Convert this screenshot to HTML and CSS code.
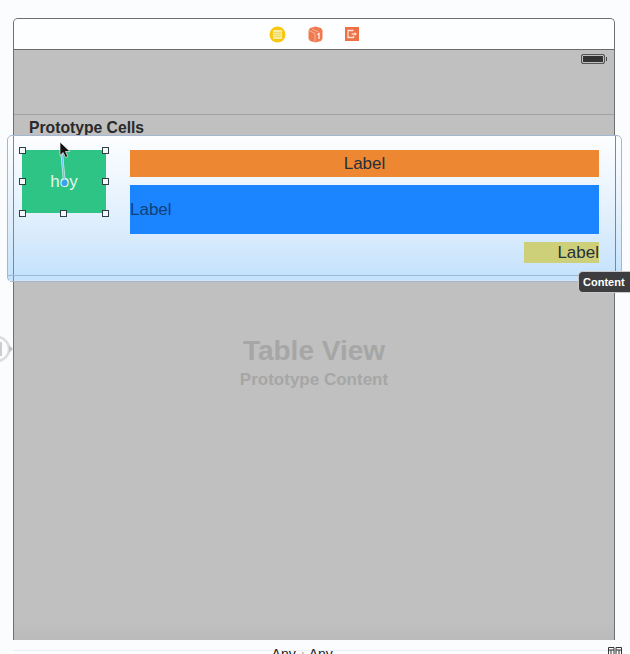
FILE: index.html
```html
<!DOCTYPE html>
<html lang="en">
<head>
<meta charset="utf-8">
<title>Storyboard</title>
<link rel="stylesheet" href="styles.css">
</head>
<body>
<main class="canvas">
  <svg class="segue" width="24" height="36" viewBox="0 0 24 36" aria-hidden="true">
    <circle cx="-3" cy="18" r="12" fill="none" stroke="#dcdcdc" stroke-width="2.5"/>
    <rect x="-3" y="11" width="5" height="14" fill="#cdcdcd"/>
    <path d="M9 14 L13 18 L9 22Z" fill="#c4c4c4"/>
  </svg>
  <section class="scene">
    <header class="dock">
      <svg width="17" height="17" viewBox="0 0 17 17" aria-hidden="true">
        <circle cx="8.5" cy="8.5" r="8" fill="#f8c714"/>
        <rect x="4" y="4" width="9" height="9" rx="1" fill="#f9eda0"/>
        <path d="M4.5 6.5h8M4.5 8.5h8M4.5 10.5h8" stroke="#eccb4a" stroke-width=".7"/>
      </svg>
      <svg width="15" height="17" viewBox="0 0 15 17" aria-hidden="true">
        <path d="M7.5.5 13 2 14.500 4.500V12.500L13 15 7.5 16.500 2 15 .5 12.500V4.500L2 2Z" fill="#ef7a50"/>
        <path d="M1 4.5 7 7.5V16M4 3l6.5 3" stroke="#f9c3ac" stroke-width=".8" fill="none"/>
        <path d="M9.5 8.5 11 7.5V13" stroke="#fff" stroke-width="1.2" fill="none"/>
      </svg>
      <svg width="14" height="14" viewBox="0 0 14 14" aria-hidden="true">
        <rect width="14" height="14" fill="#ee7044"/>
        <path d="M8.5 3.5H3v7h5.500V9" stroke="#fde4d8" stroke-width="1.300" fill="none"/>
        <path d="M6.500 7H10" stroke="#fde4d8" stroke-width="1.300"/>
        <path d="M9.500 5 12 7 9.500 9Z" fill="#fde4d8"/>
      </svg>
    </header>
    <div class="status">
      <span class="battery"></span>
    </div>
    <h2 class="section-title">Prototype Cells</h2>
    <article class="cell">
      <div class="cell-body">
        <div class="thumb">
          <span class="thumb-text">hoy</span>
          <i class="handle h-tl"></i><i class="handle h-tr"></i>
          <i class="handle h-ml"></i><i class="handle h-mr"></i>
          <i class="handle h-bl"></i><i class="handle h-bm"></i><i class="handle h-br"></i>
          <svg class="wire" width="12" height="44" viewBox="0 0 12 44" aria-hidden="true">
            <path d="M2.500 1 5.500 33" stroke="#fff" stroke-width="2.600" opacity=".75"/>
            <path d="M2.500 1 5.500 33" stroke="#6fbcf4" stroke-width="1.200"/>
            <circle cx="5.500" cy="33" r="3" fill="#3c9ff0"/>
          </svg>
        </div>
        <div class="labels">
          <div class="label label-orange">Label</div>
          <div class="label label-blue">Label</div>
          <div class="label label-olive">Label</div>
        </div>
      </div>
      <div class="cell-foot"></div>
      <span class="tooltip">Content</span>
    </article>
    <svg class="cursor" width="13" height="18" viewBox="0 0 13 18" aria-hidden="true">
      <path d="M1 1V14.500L4.200 11.500 6.500 16.500 8.800 15.500 6.500 10.500H11Z" fill="#111" stroke="#f4f4f4" stroke-width=".7"/>
    </svg>
    <div class="table-body">
      <div class="table-title">Table View</div>
      <div class="table-sub">Prototype Content</div>
    </div>
  </section>
  <footer class="size-bar">
    <span class="size-mark">w</span><span class="size-any">Any</span>
    <span class="size-mark size-h">h</span><span class="size-any">Any</span>
    <svg class="size-icon" width="14" height="8" viewBox="0 0 14 8" aria-hidden="true">
      <path d="M.5 8V.500H6V8M.500 3H6M8 8V.500h5.500V8M8 3h5.500M3 3v5M11 3v5" stroke="#333" fill="none"/>
    </svg>
  </footer>
</main>
</body>
</html>
```
FILE: styles.css
```css
* { box-sizing: border-box; }
html, body { margin: 0; height: 100%; }
body {
  background: #fbfcfe;
  font-family: "Liberation Sans", Arial, sans-serif;
  overflow: hidden;
}
.canvas {
  position: relative;
  width: 630px;
  height: 654px;
  padding: 18px 15px 0 13px;
  overflow: hidden;
}
.segue { position: absolute; left: 0; top: 331px; }
.scene {
  position: relative;
  width: 602px;
  height: 622px;
  display: flex;
  flex-direction: column;
  border: 1px solid #6f6f6f;
  border-bottom: 0;
  border-radius: 5px 5px 0 0;
  background: linear-gradient(to bottom, #c0c0c0 0, #c0c0c0 97%, #bababa 100%);
}
.dock {
  height: 31px;
  flex: none;
  display: flex;
  align-items: center;
  justify-content: center;
  gap: 22px;
  background: #fdfeff;
  border-bottom: 1px solid #6b6b6b;
  border-radius: 4px 4px 0 0;
}
.status {
  height: 65px;
  flex: none;
  display: flex;
  justify-content: flex-end;
  padding: 4px 9px 0 0;
  border-bottom: 1px solid #a2a2a2;
}
.battery {
  position: relative;
  width: 24px;
  height: 10px;
  border: 1px solid #555;
  border-radius: 2px;
  background: #333;
  box-shadow: inset 0 0 0 1px #c0c0c0;
}
.battery::after {
  content: "";
  position: absolute;
  right: -3px;
  top: 2px;
  width: 1px;
  height: 4px;
  background: #444;
}
.section-title {
  height: 20px;
  flex: none;
  margin: 0;
  padding: 4px 0 0 15px;
  font-size: 15.7px;
  line-height: 17px;
  font-weight: bold;
  color: #2a2a2a;
}
.cell {
  position: relative;
  flex: none;
  margin: 0 -8px 0 -7px;
  height: 147px;
  border: 1px solid #a3b7d3;
  border-radius: 5px;
  background: linear-gradient(to bottom, #fdfeff 0, #ecf5fe 35%, #dfeefc 60%, #c6e3fd 95%);
}
.cell::before {
  content: "";
  position: absolute;
  top: 0;
  bottom: 0;
  left: 5px;
  right: 5px;
  border-left: 1px solid #7e8794;
  border-right: 1px solid #7e8794;
}
.cell-body {
  position: relative;
  display: grid;
  grid-template-columns: 84px 1fr;
  column-gap: 24px;
  align-items: start;
  padding: 14px 22px 12px 14px;
  border-bottom: 1px solid #9db8d6;
}
.thumb {
  position: relative;
  height: 63px;
  background: #2ec486;
  display: flex;
  align-items: center;
  justify-content: center;
}
.thumb-text { color: #e4f6ee; font-size: 17px; }
.handle {
  position: absolute;
  width: 7px;
  height: 7px;
  border: 1px solid #2f3f44;
  background: #f4f8fb;
}
.h-tl { left: -3px; top: -3px; }
.h-tr { right: -3px; top: -3px; }
.h-ml { left: -3px; top: 28px; }
.h-mr { right: -3px; top: 28px; }
.h-bl { left: -3px; bottom: -4px; }
.h-bm { left: 38px; bottom: -4px; }
.h-br { right: -3px; bottom: -4px; }
.wire { position: absolute; left: 37px; top: 0; }
.labels { display: flex; flex-direction: column; gap: 8px; }
.label { font-size: 17px; color: #27303a; }
.label-orange {
  height: 27px;
  line-height: 27px;
  text-align: center;
  background: #ee8732;
}
.label-blue {
  height: 49px;
  line-height: 49px;
  background: #1a85fe;
  color: #123f7a;
}
.label-olive {
  align-self: flex-end;
  width: 75px;
  height: 21px;
  line-height: 21px;
  text-align: right;
  background: #cdcf79;
}
.cell-foot { height: 5px; border-bottom: 1px solid #d5e4f3; }
.tooltip {
  position: absolute;
  right: -9px;
  top: 135px;
  width: 52px;
  height: 22px;
  padding-left: 4px;
  border: 1px solid #c9c9c9;
  border-right: 0;
  border-radius: 5px 0 0 5px;
  background: #3d3d40;
  color: #fff;
  font-size: 11px;
  font-weight: bold;
  line-height: 20px;
}
.cursor { position: absolute; left: 45px; top: 122px; }
.table-body { flex: 1; text-align: center; padding-top: 53px; }
.table-title {
  font-size: 28px;
  line-height: 32px;
  font-weight: bold;
  color: #a6a6a6;
}
.table-sub {
  margin-top: 3px;
  font-size: 17px;
  line-height: 20px;
  font-weight: bold;
  color: #a6a6a6;
}
.size-bar {
  position: relative;
  display: flex;
  justify-content: center;
  align-items: baseline;
  height: 14px;
  margin-top: 0;
  padding: 6px 32px 0 0;
  line-height: 16px;
  color: #222;
}
.size-bar::before {
  content: "";
  position: absolute;
  left: 0;
  right: -6px;
  top: 10px;
  border-top: 1px solid #eceff3;
}
.size-any { position: relative; font-size: 14px; }
.size-mark { position: relative; font-size: 9px; color: #888; margin-right: 2px; }
.size-h { margin-left: 6px; }
.size-icon { position: absolute; right: -7px; top: 7px; }
```
